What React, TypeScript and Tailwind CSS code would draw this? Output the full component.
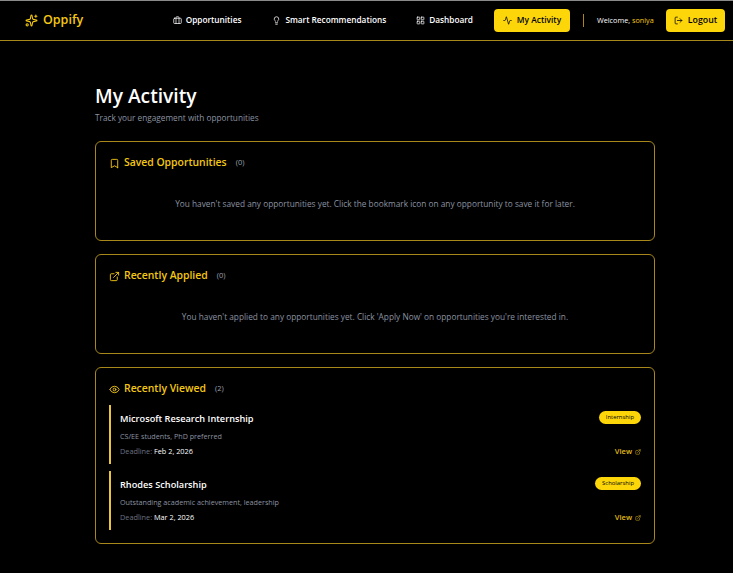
import { Activity, Bookmark, Briefcase, ExternalLink, Eye, LayoutGrid, Lightbulb, LogOut, Sparkles } from "lucide-react";
import type { ReactNode } from "react";

function NavLink({ icon, label }: { icon: ReactNode; label: string }) {
  return (
    <a className="flex items-center gap-[4px] text-[8.25px] font-semibold text-white">
      {icon}
      <span>{label}</span>
    </a>
  );
}

function Card({ icon, title, count, children, className }: { icon: ReactNode; title: string; count: number; children: ReactNode; className: string }) {
  return (
    <section className={`rounded-[6px] border border-[#a8881a] px-[13px] pt-[13px] ${className}`}>
      <div className="flex h-[16px] items-center">
        {icon}
        <h2 className="ml-[4px] text-[10.4px] font-semibold text-[#f5c811]">{title}</h2>
        <span className="ml-[9px] text-[7.5px] text-[#9ca3af]">({count})</span>
      </div>
      {children}
    </section>
  );
}

function Empty({ children }: { children: ReactNode }) {
  return <p className="pt-[27px] text-center text-[8.3px] leading-[12px] text-[#8b93a1]">{children}</p>;
}

function Item({ title, desc, date, tag }: { title: string; desc: string; date: string; tag: string }) {
  return (
    <div className="flex h-[59px] justify-between border-l-2 border-[#eac43a] pl-[9px]">
      <div>
        <h3 className="pt-[7px] text-[9.2px] font-semibold leading-[14px] text-white">{title}</h3>
        <p className="mt-[5px] text-[7.2px] leading-[11px] text-[#8b93a1]">{desc}</p>
        <p className="mt-[4px] text-[7.3px] leading-[11px] text-[#6b7280]">
          Deadline: <span className="font-medium text-white">{date}</span>
        </p>
      </div>
      <div className="flex flex-col items-end">
        <span className="mt-[6px] rounded-full bg-[#fdd60a] px-[7px] text-[5.9px] leading-[13px] text-black">{tag}</span>
        <a className="mt-[22px] flex items-center gap-[3px] text-[7.5px] font-semibold leading-[11px] text-[#e0bb16]">
          View <ExternalLink className="size-[6px]" strokeWidth={2} />
        </a>
      </div>
    </div>
  );
}

export default function App() {
  return (
    <div className="min-h-[573px] border-t border-[#8a8a8a] bg-black font-['Open_Sans','Noto_Sans',sans-serif]">
      <header className="flex h-[40px] items-center border-b border-[#a8881a] pl-[25px] pr-[8px]">
        <div className="flex items-center gap-[5px] text-[12.5px] font-semibold text-[#f5c811]">
          <Sparkles className="size-[13px]" strokeWidth={2} />
          <span>Oppify</span>
        </div>
        <nav className="ml-auto flex items-center">
          <NavLink icon={<Briefcase className="size-[9px]" />} label="Opportunities" />
          <div className="ml-[31px]"><NavLink icon={<Lightbulb className="size-[9px]" />} label="Smart Recommendations" /></div>
          <div className="ml-[30px]"><NavLink icon={<LayoutGrid className="size-[9px]" />} label="Dashboard" /></div>
          <a className="ml-[21px] flex h-[23px] w-[76px] items-center justify-center gap-[5px] rounded-[4px] bg-[#fdd60a] text-[8.4px] font-semibold text-black">
            <Activity className="size-[9px]" />
            My Activity
          </a>
          <div className="ml-[13px] h-[13px] w-px bg-[#a8881a]" />
          <span className="ml-[13px] w-[56px] whitespace-nowrap text-[7.25px] text-white">Welcome, <span className="text-[#f5c811]">soniya</span></span>
          <button className="ml-[13px] flex h-[23px] w-[59px] items-center justify-center gap-[5px] rounded-[4px] bg-[#fdd60a] text-[8.8px] font-semibold text-black">
            <LogOut className="size-[9px]" />
            Logout
          </button>
        </nav>
      </header>
      <main className="ml-[95px] w-[560px] pt-[41px]">
        <h1 className="text-[19.2px] font-semibold leading-[27px] text-white">My Activity</h1>
        <p className="mt-[3px] text-[8.25px] leading-[12px] text-[#8b93a1]">Track your engagement with opportunities</p>
        <div className="mt-[17px] flex flex-col gap-[13px]">
          <Card className="h-[100px]" icon={<Bookmark className="size-[11px] text-[#f5c811]" />} title="Saved Opportunities" count={0}>
            <Empty>You haven't saved any opportunities yet. Click the bookmark icon on any opportunity to save it for later.</Empty>
          </Card>
          <Card className="h-[100px]" icon={<ExternalLink className="size-[11px] text-[#f5c811]" />} title="Recently Applied" count={0}>
            <Empty>You haven't applied to any opportunities yet. Click 'Apply Now' on opportunities you're interested in.</Empty>
          </Card>
          <Card className="h-[177px]" icon={<Eye className="size-[11px] text-[#f5c811]" />} title="Recently Viewed" count={2}>
            <div className="mt-[8px] flex flex-col gap-[7px]">
              <Item title="Microsoft Research Internship" desc="CS/EE students, PhD preferred" date="Feb 2, 2026" tag="Internship" />
              <Item title="Rhodes Scholarship" desc="Outstanding academic achievement, leadership" date="Mar 2, 2026" tag="Scholarship" />
            </div>
          </Card>
        </div>
      </main>
    </div>
  );
}
